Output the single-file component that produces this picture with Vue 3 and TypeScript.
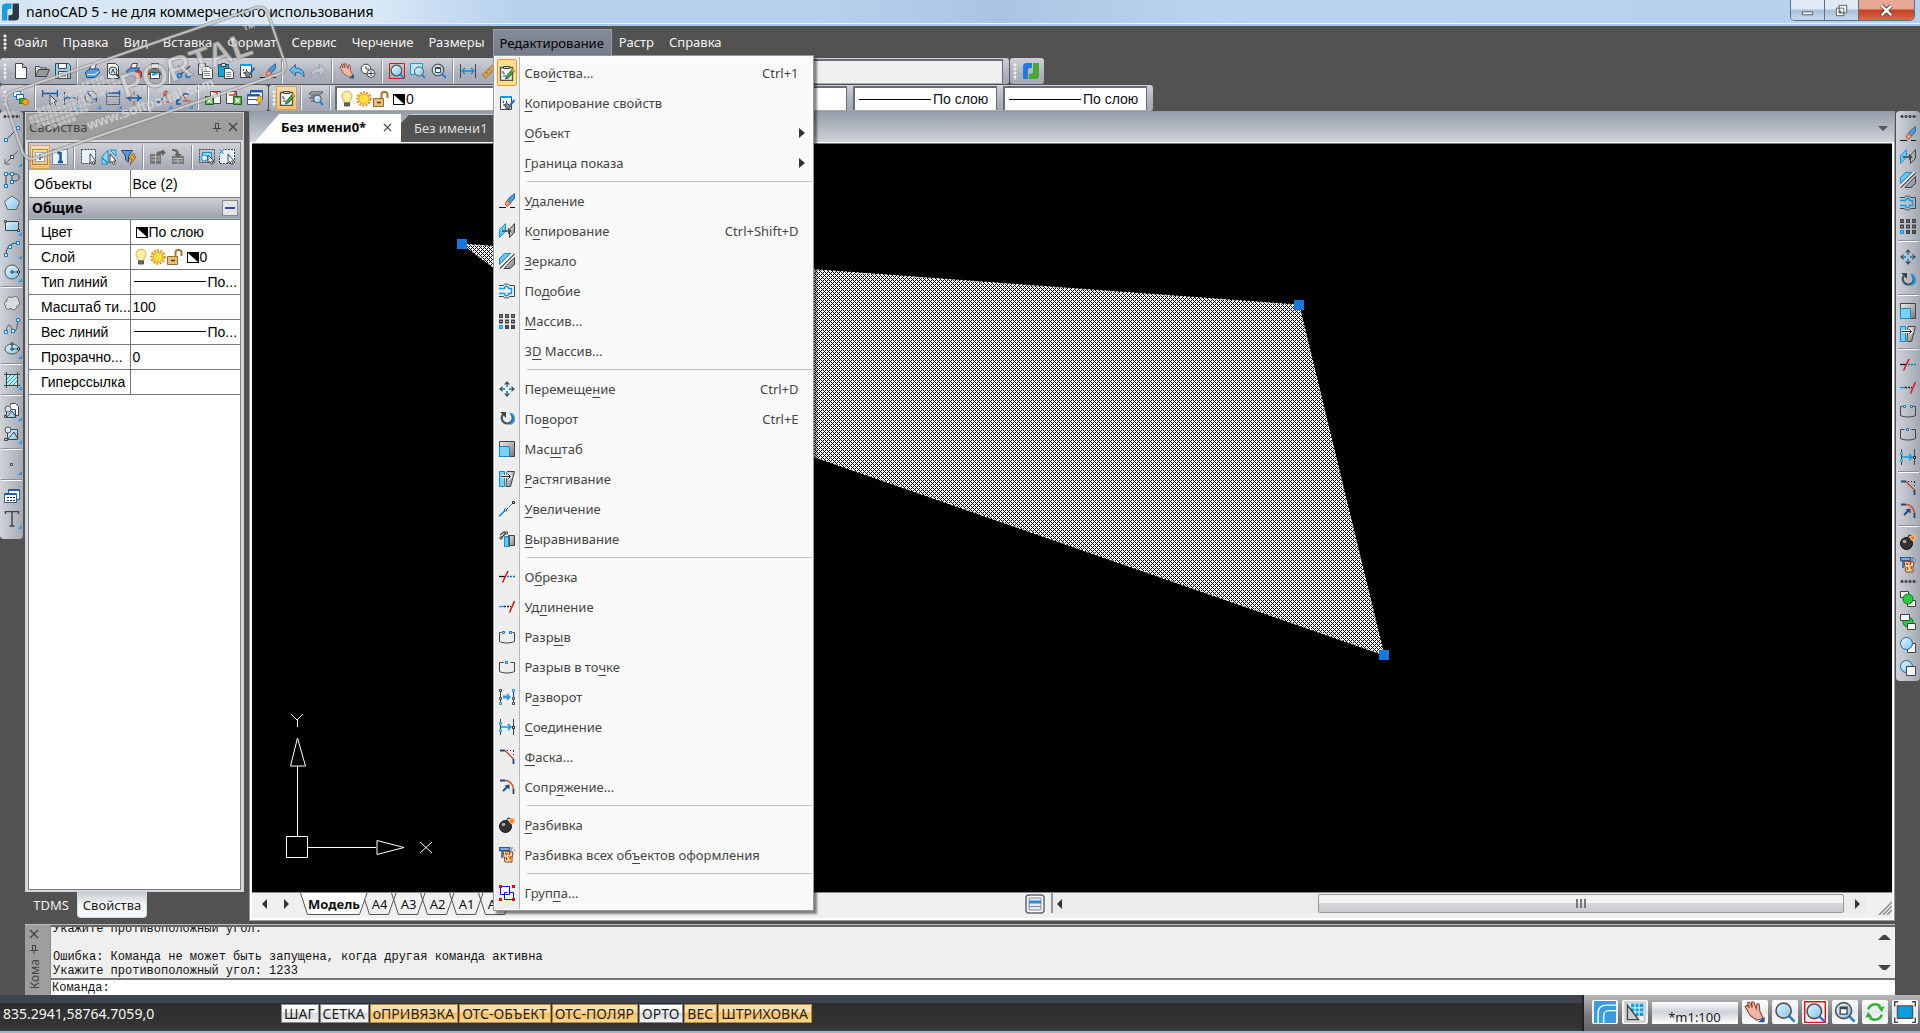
<script setup lang="ts">
interface MenuEntry { label: string; icon?: string; key?: string; sub?: boolean; on?: boolean }

const menus: string[] = ['Файл', 'Правка', 'Вид', 'Вставка', 'Формат', 'Сервис', 'Черчение', 'Размеры', 'Редактирование', 'Растр', 'Справка']

const groups: MenuEntry[][] = [
  [
    { label: 'Сво&йства...', icon: 'clip', key: 'Ctrl+1', on: true },
    { label: '&Копирование свойств', icon: 'match' },
    { label: '&Объект', sub: true },
    { label: '&Граница показа', sub: true },
  ],
  [
    { label: '&Удаление', icon: 'erase' },
    { label: 'К&опирование', icon: 'copyobj', key: 'Ctrl+Shift+D' },
    { label: '&Зеркало', icon: 'mirror' },
    { label: 'По&добие', icon: 'offset' },
    { label: '&Массив...', icon: 'array' },
    { label: '3&D Массив...' },
  ],
  [
    { label: 'Перемеще&ние', icon: 'move', key: 'Ctrl+D' },
    { label: 'По&ворот', icon: 'rotate', key: 'Ctrl+E' },
    { label: 'Мас&штаб', icon: 'scale' },
    { label: '&Растягивание', icon: 'stretch' },
    { label: '&Увеличение', icon: 'lengthen' },
    { label: '&Выравнивание', icon: 'align' },
  ],
  [
    { label: 'О&брезка', icon: 'trim' },
    { label: 'Уд&линение', icon: 'extend' },
    { label: 'Разр&ыв', icon: 'break' },
    { label: 'Разрыв в то&чке', icon: 'breakpt' },
    { label: 'Р&азворот', icon: 'reverse' },
    { label: '&Соединение', icon: 'join' },
    { label: '&Фаска...', icon: 'chamfer' },
    { label: 'Сопр&яжение...', icon: 'fillet' },
  ],
  [
    { label: '&Разбивка', icon: 'bomb' },
    { label: 'Разбивка всех об&ъектов оформления', icon: 'explode' },
  ],
  [{ label: 'Груп&па...', icon: 'group' }],
]

function parts(label: string): [string, string, string] {
  const i = label.indexOf('&')
  return [label.slice(0, i), label.slice(i + 1, i + 2), label.slice(i + 2)]
}

const standard: string[] = ['new', 'open', 'save', '|', 'print', 'preview', 'printx', 'plot', '|', 'cut', 'copy', 'paste', 'match', 'erase', '|', 'undo', 'redo', '|', 'hand', 'zoomrt', '|', 'zoomred', 'zoomwin', 'zoomdoc', '|', 'dim', 'ruler']
const dims: string[] = ['layers', '|', 'dimsel', 'dimlin', 'dimang', 'dimbox', 'dimcross', '|', 'dimtol', 'dimlead', '|', 'xl1', 'xl2', 'tablebolt']
const draw: string[] = ['line', 'ray', 'pline', 'penta', 'rect', 'arc', 'circle', '|', 'cloud', 'spline', 'ellipse', '|', 'hatch', '|', 'insdoc', 'insimg', '|', 'point', '|', 'table', 'text']
const modify: string[] = ['erase', 'copyobj', 'mirror', 'offset', 'array', '|', 'move', 'rotate', '|', 'scale', 'stretch', '|', 'trim', 'extend', 'break', 'breakpt', 'join', '|', 'chamfer', 'fillet', '|', 'bomb', 'explode']
const order: string[] = ['ord1', 'ord2', 'ord3', 'ord4']
const flyouts = new Set(['ray', 'rect', 'arc', 'circle', 'ellipse', 'hatch', 'insdoc', 'insimg', 'point', 'text', 'dimlin', 'dimang', 'dimbox', 'dimtol', 'dimlead'])
const propTools: string[] = ['selall', 'one', '|', 'sel', 'selflip', 'funnel', '|', 'gridup', 'griddown', '|', 'selsim', 'seldel']

const modes = [
  { name: 'ШАГ', on: false }, { name: 'СЕТКА', on: false }, { name: 'оПРИВЯЗКА', on: true },
  { name: 'ОТС-ОБЪЕКТ', on: true }, { name: 'ОТС-ПОЛЯР', on: true }, { name: 'ОРТО', on: false },
  { name: 'ВЕС', on: true }, { name: 'ШТРИХОВКА', on: true },
]
const sheets: string[] = ['A4', 'A3', 'A2', 'A1', 'A0']
const mapRows: number[][] = [[9, 17], [7, 19], [2, 20], [0, 18], [0, 14], [1, 12], [3, 9]]
</script>

<template>
  <svg class="defs" aria-hidden="true">
    <defs>
      <linearGradient id="gb" x1="0" y1="0" x2="1" y2="1"><stop offset="0" stop-color="#e8f6ff" /><stop offset="1" stop-color="#7cc4ee" /></linearGradient>
      <linearGradient id="gg" x1="0" y1="0" x2="1" y2="1"><stop offset="0" stop-color="#eee" /><stop offset="1" stop-color="#777" /></linearGradient>
      <pattern id="dots" width="4" height="4" patternUnits="userSpaceOnUse"><path d="M0 0h1v2H0zM2 0h1v1H2zM1 1h1v1H1zM3 1h1v1H3zM0 2h1v1H0zM2 2h1v2H2zM1 3h1v1H1zM3 3h1v1H3z" fill="#fff" stroke="none" /></pattern>
    </defs>
      <symbol id="new" viewBox="0 0 16 16"><path d="M2.500.5h7l4 4v11h-11z" fill="#fdfdfd" /><path d="M9.500.500v4h4" fill="#ccc" /></symbol>
      <symbol id="open" viewBox="0 0 16 16"><path d="M1.500 13.500v-10h4l1 1.500h6v2" fill="#ddd" /><path d="M1.500 13.500l3-7h11l-3 7z" fill="#999" /></symbol>
      <symbol id="save" viewBox="0 0 16 16"><path d="M.5.5h13l2 2v13H.5z" fill="#8cd0f4" /><path d="M3.500.5h8v5h-8zM3.500 8.500h9v7h-9z" fill="#fff" /><path d="M5 11h6M5 13h6" /></symbol>
      <symbol id="print" viewBox="0 0 16 16"><path d="M5.500 6l2-5.500h5l-2 6z" fill="#fff" /><path d="M1.500 9l4-3h9l1 4-5 4.500h-8z" fill="#5aa0e0" stroke="#1a4a88" /><path d="M3 11.500h8l4-3" stroke="#e8f4ff" /></symbol>
      <symbol id="preview" viewBox="0 0 16 16"><path d="M2.500.5h8l3 3v12h-11z" fill="#f6f6f6" /><circle cx="8" cy="8" r="4" fill="#c8e8fa" /><path d="M11 11l4 4" stroke-width="2" /><path d="M6.500 10L8 6l1.500 4" /></symbol>
      <symbol id="printx" viewBox="0 0 16 16"><path d="M4.500 5l2-4.500h5l-2 5z" fill="#fff" /><path d="M.5 8l4-3h9l-3 7h-8z" fill="#5a90d0" stroke="#1a4a88" /><circle cx="12" cy="11.500" r="4" fill="#e04040" stroke="#a02020" /><path d="M10.500 10l3 3m0-3l-3 3" stroke="#fff" /></symbol>
      <symbol id="plot" viewBox="0 0 16 16"><path d="M4.500.5h7v6h-7z" fill="#fff" /><path d="M1.500 5.500h13v6h-13z" fill="#777" /><path d="M3.500 9.500h9v6h-9z" fill="#fff" /><path d="M5 12l6-2" stroke="#0a9fe0" stroke-width="2" /></symbol>
      <symbol id="cut" viewBox="0 0 16 16"><path d="M2 3l9 8M14 3l-9 8" stroke-width="1.500" /><circle cx="3.500" cy="12.500" r="2" stroke="#0a70c0" stroke-width="1.500" /><circle cx="12" cy="12.500" r="2" stroke="#0a70c0" stroke-width="1.500" /></symbol>
      <symbol id="copy" viewBox="0 0 16 16"><path d="M1.500.5h7v11h-7z" fill="#eee" /><path d="M5.500 3.500h6l4 3v9h-10z" fill="#fff" /><path d="M7 8.500h6M7 10.500h6M7 12.500h6" stroke="#888" /></symbol>
      <symbol id="paste" viewBox="0 0 16 16"><path d="M.5 1.500h10v12H.5z" fill="#18a4d4" stroke="#08607c" /><path d="M3.500.5h4v3h-4z" fill="#ddd" /><path d="M6.500 5.500h6l3 3v7h-9z" fill="#fff" /><path d="M8 9.500h5M8 11.500h5M8 13.500h5" stroke="#888" /></symbol>
      <symbol id="match" viewBox="0 0 16 16"><path d="M1.500 1.500h11v13h-11z" fill="#f4f4f4" /><path d="M1 2h12" stroke="#0a9fe0" stroke-width="2" /><path d="M4.500 6v2M7.500 6v2M4 10h2" /><path d="M5.500 9.500l3-1 3 3-1.500 2.500H7.500z" fill="#888" /><path d="M11 10.500l4.500-5.500" stroke="#1470c0" stroke-width="2" /></symbol>
      <symbol id="erase" viewBox="0 0 16 16"><path d="M0 14.500h7M11 14.500h5" stroke="#111" /><path d="M15.500.5l-6 5-1.500 4 3 1 4.500-5z" fill="#4a9cd8" stroke="#2a6aa0" /><path d="M8.500 7l-2.500 4 2 2.500 3.500-3z" fill="#f0a080" stroke="#b05030" /></symbol>
      <symbol id="undo" viewBox="0 0 16 16"><path d="M.5 7l6-5.500v3.500c6 0 9 3 8.500 9-2-3.500-4-4.500-8.500-4.500V13z" fill="#6cb8e8" stroke="#2a6a98" /></symbol>
      <symbol id="redo" viewBox="0 0 16 16"><path d="M15.500 7l-6-5.500v3.500C3.500 5 .5 8 1 14c2-3.500 4-4.500 8.500-4.500V13z" fill="#c4c8cc" stroke="#9a9ea4" /></symbol>
      <symbol id="hand" viewBox="0 0 16 16"><path d="M9.500 14l-5-3.500L.8 4l1.500-.8L4 5 2.500 1.500 4 .8l2 4L5.500.8 7 .6l2 5L9.500 2l1.500.2.5 5.300 2.500 5z" fill="#f0b8a4" stroke="#8a4434" stroke-width=".8" /><path d="M10 15.500l5-4v4z" fill="#1458a8" stroke="none" /></symbol>
      <symbol id="zoomrt" viewBox="0 0 16 16"><circle cx="6" cy="6" r="4.800" fill="#f4f4f4" /><circle cx="11" cy="10.500" r="4" fill="#eee" /><path d="M6 3v3h3M8 10.500h6M11 8v5" /></symbol>
      <symbol id="zoom" viewBox="0 0 16 16"><path d="M11 11l4 4" stroke="#2c7fd8" stroke-width="2" /><circle cx="7" cy="7" r="5.500" fill="url(#gb)" stroke="#555" stroke-width="1.200" /></symbol>
      <symbol id="zoomred" viewBox="0 0 16 16"><path d="M.5.5h15v15H.5z" stroke="#e01010" /><path d="M11 11l4 4" stroke="#2c7fd8" stroke-width="2" /><circle cx="7.500" cy="7.500" r="5.300" fill="url(#gb)" stroke="#555" stroke-width="1.200" /></symbol>
      <symbol id="zoomwin" viewBox="0 0 16 16"><path d="M.5.5h12v11H.5z" stroke="#0a9fe0" fill="#bfe4f8" /><path d="M12 12l3 3" stroke="#2c7fd8" stroke-width="2" /><circle cx="9" cy="8.500" r="4.500" fill="url(#gb)" stroke="#555" /></symbol>
      <symbol id="zoomdoc" viewBox="0 0 16 16"><path d="M11 11l4 4" stroke="#2c7fd8" stroke-width="2" /><circle cx="7" cy="7" r="5.800" fill="url(#gb)" stroke="#555" stroke-width="1.200" /><path d="M4.500 4.500h5v5h-5zM4.500 5.500h5" fill="#fff" /></symbol>
      <symbol id="dim" viewBox="0 0 16 16"><path d="M.5 1v14M15.500 1v14" /><path d="M2 8h12M5 5L2 8l3 3M11 5l3 3-3 3" stroke="#0a8fe0" stroke-width="1.300" /></symbol>
      <symbol id="ruler" viewBox="0 0 16 16"><path d="M1.500 12l10-10 3 3-10 10z" fill="#e0a848" stroke="#9a6820" /><path d="M5 9l1.500 1.500M8 6l1.500 1.500" stroke="#7a4810" /></symbol>
      <symbol id="layers" viewBox="0 0 16 16"><path d="M.5 1.500h7v5h-7z" fill="#fff" stroke="#0a8fe0" /><path d="M3.500 4.500h7v5h-7z" fill="#fff" stroke="#0a60c0" /><path d="M6.500 8.500h6v5h-6z" fill="#30b030" stroke="#108010" /><circle cx="12.500" cy="12" r="3" fill="#f8a818" stroke="#c07000" /></symbol>
      <symbol id="dimsel" viewBox="0 0 16 16"><path d="M.5 0v7M15.500 0v7M1 3.500h14" stroke="#185a9c" stroke-width="1.500" /><path d="M8 5v10l2.500-2 1.500 3 1.500-1-1.500-3h3z" fill="#ddd" /></symbol>
      <symbol id="dimlin" viewBox="0 0 16 16"><path d="M1.500 2v13M14.500 6v8" /><path d="M2 8h12M5 6L2 8l3 2" stroke="#185a9c" stroke-width="1.500" /></symbol>
      <symbol id="dimang" viewBox="0 0 16 16"><circle cx="7" cy="7" r="6" /><path d="M3 2l9 10M8 12h4V8" stroke="#185a9c" stroke-width="1.500" /></symbol>
      <symbol id="dimbox" viewBox="0 0 16 16"><path d="M1.500.5v5M14.500.5v5M2 3h12" stroke="#185a9c" stroke-width="1.500" /><path d="M1.500 6.500h13v8h-13z" stroke-dasharray="2 1" /></symbol>
      <symbol id="dimcross" viewBox="0 0 16 16"><path d="M0 8h16M5 5L2 8l3 3M11 5l3 3-3 3" stroke="#185a9c" stroke-width="1.300" /><path d="M8 1v4M8 11v4" stroke="#d04020" /></symbol>
      <symbol id="dimtol" viewBox="0 0 16 16"><path d="M0 12h5l6-8" stroke="#185a9c" stroke-width="1.500" /><circle cx="11" cy="4" r="2.500" stroke="#d04020" /><path d="M11 0v8M7 12h7" stroke="#d04020" /></symbol>
      <symbol id="dimlead" viewBox="0 0 16 16"><path d="M0 13L8 4h6M1 9v5h4" stroke="#185a9c" stroke-width="1.500" /><path d="M7 5l4 6M7 11h8" stroke="#d04020" /></symbol>
      <symbol id="xl1" viewBox="0 0 16 16"><path d="M5.500 1.500h10v12h-10z" fill="#fff" /><path d="M.5 6.500h8v8h-8z" fill="#5cb040" stroke="#206020" /><path d="M2.500 8.500l4 4m0-4l-4 4" stroke="#fff" stroke-width="1.500" /><path d="M8 2h4v4" stroke="#d03020" stroke-width="1.500" /></symbol>
      <symbol id="xl2" viewBox="0 0 16 16"><path d="M.5 1.500h10v12H.5z" fill="#fff" /><path d="M7.500 6.500h8v8h-8z" fill="#5cb040" stroke="#206020" /><path d="M9.500 8.500l4 4m0-4l-4 4" stroke="#fff" stroke-width="1.500" /><path d="M3 5h6V1" stroke="#d03020" stroke-width="1.500" /></symbol>
      <symbol id="tablebolt" viewBox="0 0 16 16"><path d="M3.500.5h12v9h-12z" fill="#fff" stroke="#2a5aa0" /><path d="M.5 4.500h12v10H.5zM.5 9.500h12" fill="#fff" stroke="#2a5aa0" /><path d="M4 1.500h11M1 5.500h11" stroke="#2a5aa0" stroke-width="2" /><path d="M12 6l-3 5h3l-2 5 6-7h-3l2-3z" fill="#ffc020" stroke="#b07000" stroke-width=".6" /></symbol>
      <symbol id="clip" viewBox="0 0 16 16"><path d="M1.500 2.500h12v13h-12z" fill="#f4f4f4" stroke="#555" stroke-width="1.400" /><path d="M4.500 1.500h6v2h-6z" fill="#ccc" /><path d="M4 6v2l2 1M4 11h3" /><path d="M6.500 14l1-3 6-7 2 2-6 7z" fill="#40a838" stroke="#206018" stroke-width=".8" /><path d="M12.500 5l1-1.200 2 2-1 1.200z" fill="#f09070" stroke="none" /></symbol>
      <symbol id="look" viewBox="0 0 16 16"><path d="M3 2h12l-2 2H1zM3 6h8M1 8h6M3 11h3" fill="#eee" /><path d="M12 12l3 3" stroke="#2c7fd8" stroke-width="2" /><circle cx="9.500" cy="9" r="3.800" fill="url(#gb)" stroke="#555" /></symbol>
      <symbol id="bulb" viewBox="0 0 16 16"><path d="M8 .5c-6 0-6 6-3 9v2h6v-2c3-3 3-9-3-9z" fill="#fff0a0" stroke="#c8a860" /><path d="M5.500 12h5v3h-5z" fill="#666" stroke="#555" /></symbol>
      <symbol id="sun" viewBox="0 0 16 16"><circle cx="8" cy="8" r="6.500" stroke="#e89820" stroke-width="2.500" stroke-dasharray="2 1.200" /><circle cx="8" cy="8" r="5" fill="#ffe040" stroke="#f0a020" /></symbol>
      <symbol id="lock" viewBox="0 0 16 16"><path d="M8.500 8V3.500c0-3.500 6-3.500 6 0V7" stroke="#a87830" stroke-width="2" /><path d="M.5 7.500h10v8H.5z" fill="#e8c078" stroke="#9a6c28" /><path d="M4 11.500h4" stroke="#5a3808" stroke-width="1.500" /></symbol>
      <symbol id="bw" viewBox="0 0 16 16"><path d="M3 3h12v11H3z" fill="#000" stroke="none" /><path d="M4 4l10 9H4z" fill="#fff" stroke="none" /></symbol>
      <symbol id="selall" viewBox="0 0 16 16"><path d="M.5.5h15v15H.5z" stroke-dasharray="1 1" /><path d="M3.500 3.500h9v9h-9z" fill="#fff" stroke="#2a60b0" stroke-dasharray="1 1" /><path d="M8 5v6M5 8h6" stroke="#1450b0" stroke-width="1.500" /></symbol>
      <symbol id="one" viewBox="0 0 16 16"><path d="M.5.5h15v15H.5z" stroke-dasharray="1 1" fill="#e4f2fa" /><path d="M8.500 3v10M5.500 4.500L8 3M6 13h5" stroke="#185a9c" stroke-width="2.500" /></symbol>
      <symbol id="sel" viewBox="0 0 16 16"><path d="M.5.5h14v14H.5z" stroke-dasharray="2 1" fill="#e4f2fa" /><path d="M9 5v9l2-1.500 1.500 3 1.500-.8-1.500-2.700H15z" fill="#fff" /></symbol>
      <symbol id="selflip" viewBox="0 0 16 16"><path d="M7 1v13L.8 8zM9 1h6v6zM1 9v6h6z" fill="#9cd4f4" stroke="#0a8fd0" /><path d="M9 5v9l2-1.500 1.500 3 1.500-.8-1.500-2.700H15z" fill="#fff" /></symbol>
      <symbol id="funnel" viewBox="0 0 16 16"><path d="M.5 1.500h11L7.500 7v6l-3-2V7z" fill="#5a98d0" stroke="#1a4a80" /><path d="M11 5l-3 5h3l-2 6 6-8h-3l2-3z" fill="#f8b020" stroke="#8a5808" stroke-width=".8" /></symbol>
      <symbol id="gridup" viewBox="0 0 16 16"><path d="M0 5h11v10H0z" fill="#777" stroke="none" /><path d="M1 8h9M1 11h9M5.500 5v10" stroke="#bbb" /><path d="M6 7c0-4 2-5 6-5V0l4 3.500L12 7V5C9 5 8 5 6 7z" fill="#666" stroke="none" /></symbol>
      <symbol id="griddown" viewBox="0 0 16 16"><path d="M2 7h12v8H2z" fill="#777" stroke="none" /><path d="M3 9.500h10M3 12h10M8 7v8" stroke="#bbb" /><path d="M2 0c5 0 7 1 7 5h3l-4 4-4-4h2c0-3-1-3-4-3z" fill="#666" stroke="none" /></symbol>
      <symbol id="selsim" viewBox="0 0 16 16"><path d="M.5.5h15v13H.5z" stroke-dasharray="2 1" /><path d="M3.500 3.500h9v5h-9z" fill="#9cd4f4" stroke="#0a8fd0" /><circle cx="5.500" cy="9" r="3" fill="#dff" stroke="#0a8fd0" /><path d="M9 6v8l2-1.500 1.500 3 1.500-.8-1.500-2.700H15z" fill="#fff" /></symbol>
      <symbol id="seldel" viewBox="0 0 16 16"><path d="M6 .5h9.500v14H.500V7" stroke-dasharray="2 1" fill="#e4f2fa" /><path d="M.5.5l4 4m0-4l-4 4" stroke="#0a8fd0" /><path d="M9 5v9l2-1.500 1.500 3 1.500-.8-1.500-2.700H15z" fill="#fff" /></symbol>
      <symbol id="line" viewBox="0 0 16 16"><path d="M2 14L14 2" /><path d="M.5 12.500h3v3h-3zM12.500.5h3v3h-3z" fill="#fff" stroke="#0a78d0" /></symbol>
      <symbol id="ray" viewBox="0 0 16 16"><path d="M1 15L14 2M1 10v5h5" stroke="#666" /><path d="M6.500 6.500h3v3h-3z" fill="#fff" /></symbol>
      <symbol id="pline" viewBox="0 0 16 16"><path d="M2 14V2h6v7c6 0 7-1 7-4s-2-3-7-3" /><path d="M.5.5h3v3h-3zM6.500.5h3v3h-3zM.5 12.500h3v3h-3zM6.500 8.500h3v3h-3z" fill="#fff" stroke="#0a78d0" /></symbol>
      <symbol id="penta" viewBox="0 0 16 16"><path d="M8 1l7.500 5.500-3 8h-9l-3-8z" fill="url(#gb)" stroke="#666" /></symbol>
      <symbol id="rect" viewBox="0 0 16 16"><path d="M1.500 3.500h13v9h-13z" fill="url(#gb)" /><path d="M.5 2.500h2v2h-2zM13.500 11.500h2v2h-2z" fill="#fff" /></symbol>
      <symbol id="arc" viewBox="0 0 16 16"><path d="M2 14C2 6 6 2 14 2" /><path d="M.5 12.500h3v3h-3zM12.500.5h3v3h-3zM4.500 4.500h3v3h-3z" fill="#fff" stroke="#0a78d0" /></symbol>
      <symbol id="circle" viewBox="0 0 16 16"><circle cx="8" cy="8" r="7" fill="url(#gb)" stroke="#555" /><path d="M8 8h7" stroke="#0a78d0" /><path d="M7 7h2v2H7zM13.500 7h2v2h-2z" fill="#fff" stroke="#333" /></symbol>
      <symbol id="cloud" viewBox="0 0 16 16"><path d="M3 6c-1-4 4-5 5-3 2-3 8-1 6 2 3 2 1 6-1 6 0 4-5 5-6 2-3 3-7 0-5-2-3-1-2-5 1-5z" fill="#d8dce0" stroke="#666" /></symbol>
      <symbol id="spline" viewBox="0 0 16 16"><path d="M2 14C4 4 6 6 8 11s5 3 6-9" stroke="#555" /><path d="M.5 12.500h3v3h-3zM7.500 11.500h3v3h-3zM12.500.5h3v3h-3z" fill="#fff" stroke="#0a78d0" /></symbol>
      <symbol id="ellipse" viewBox="0 0 16 16"><ellipse cx="8" cy="8" rx="7" ry="5" fill="url(#gb)" stroke="#555" /><path d="M8 3v5h7" stroke="#0a78d0" /><path d="M7 2h2v2H7zM7 7h2v2H7zM13.500 7h2v2h-2z" fill="#fff" stroke="#333" /></symbol>
      <symbol id="hatch" viewBox="0 0 16 16"><path d="M0 2.500h16M0 13.500h16M2.500 0v16M13.500 0v16" /><path d="M3 3h10v10H3z" fill="#c4e6f8" stroke="none" /><path d="M3 7l4-4M3 11l8-8M5 13l8-8M9 13l4-4" stroke="#0a9fe0" /></symbol>
      <symbol id="insdoc" viewBox="0 0 16 16"><path d="M6.500 2.500v-2h5l3 3v9h-8" fill="#fff" /><path d="M2.500 6.500h9v8h-9z" fill="url(#gb)" /><circle cx="4" cy="6" r="3" fill="#cfe8f8" stroke="#555" /><path d="M3 14l5-6 4 6M.5 12.500h2v2h-2z" /></symbol>
      <symbol id="insimg" viewBox="0 0 16 16"><path d="M3.500 3.500h10v10h-10z" fill="url(#gb)" /><circle cx="4" cy="4" r="3" fill="#cfe8f8" stroke="#555" /><path d="M4 13l6-7 4 7M.5 12.500h3v2h-3z" /></symbol>
      <symbol id="point" viewBox="0 0 16 16"><path d="M6.500 6.500h2v2h-2z" fill="#fff" /></symbol>
      <symbol id="table" viewBox="0 0 16 16"><path d="M4.500 1.500h11v10h-11z" fill="#fff" stroke="#2a5aa0" /><path d="M.5 5.500h12v9H.5z" fill="#fff" stroke="#2a5aa0" /><path d="M5 2h10M1 6h11" stroke="#2a5aa0" stroke-width="2" /><path d="M3 9.500h2m1 0h2m1 0h2M3 12.500h2m1 0h2m1 0h2" stroke="#222" /></symbol>
      <symbol id="text" viewBox="0 0 16 16"><path d="M1.500 3V.5h13V3M8 .5v14M5.500 15h5" stroke-width="1.500" /></symbol>
      <symbol id="copyobj" viewBox="0 0 16 16"><path d="M.5 14.500v-8l6-6v8z" fill="#6cc4f0" stroke="#0a9fe0" /><path d="M10.500 14.500v-8l5-6v9z" fill="url(#gg)" /><path d="M3 8h8M9 5.500L11.500 8 9 10.500" stroke-width="1.400" /></symbol>
      <symbol id="mirror" viewBox="0 0 16 16"><path d="M.5 10.500v-5l5-5h6l-11 11z" fill="#6cc4f0" stroke="#0a8fd0" /><path d="M5 15.500h6l4.500-4v-7z" fill="url(#gg)" /><path d="M1 15L15 1" stroke="#fff" stroke-width="3" /><path d="M1 15.500L15.500 1" stroke-width="1.200" /></symbol>
      <symbol id="offset" viewBox="0 0 16 16"><path d="M0 2.500h4.500c0-2 6-2 6 0h5v11h-5c0 2-6 2-6 0H0" /><path d="M0 5.500h5.500c0-3 4-3 4 0h3v5h-3c0 3-4 3-4 0H0" stroke="#0a9fe0" stroke-width="1.400" /></symbol>
      <symbol id="array" viewBox="0 0 16 16"><path d="M.7 1.700h2.600v2.600H.7zM6.700 1.700h2.600v2.600H6.700zM12.700 1.700h2.600v2.600h-2.600zM.7 7.200h2.600v2.600H.7zM6.700 7.200h2.600v2.600H6.700zM12.700 7.200h2.600v2.600h-2.600z" stroke-width="1.400" /><path d="M6.700 12.700h2.600v2.600H6.700zM12.700 12.700h2.600v2.600h-2.600z" fill="#777" stroke-width="1.400" /><path d="M.7 12.700h2.600v2.600H.7z" fill="#fff" stroke="#0a9fe0" stroke-width="1.400" /></symbol>
      <symbol id="move" viewBox="0 0 16 16"><path d="M8 0l3 3.500H5zM8 16l3-3.500H5zM0 8l3.500-3v6zM16 8l-3.500-3v6z" fill="#4a4f58" stroke="none" /><path d="M8 3.500V6M8 10v2.500M3.500 8H6M10 8h2.500" stroke="#0a9fe0" stroke-width="2" /></symbol>
      <symbol id="rotate" viewBox="0 0 16 16"><path d="M4 3.500a5.500 5.500 0 1 0 8-.5" stroke="#456" stroke-width="2.200" /><path d="M11 2.500a5.500 5.500 0 0 1 0 10.500" stroke="#1a98e0" stroke-width="2.200" /><path d="M1 1h6v6z" fill="#444" stroke="none" /></symbol>
      <symbol id="scale" viewBox="0 0 16 16"><path d="M.5.5h15v15H.5z" fill="url(#gg)" /><path d="M.5 5.500h10v10H.5z" fill="#7cd0f8" stroke="#0a8fd0" /></symbol>
      <symbol id="stretch" viewBox="0 0 16 16"><path d="M8 .5h7.500l-4 15H7z" fill="url(#gg)" /><path d="M.5.5h5v15h-5z" fill="#7cd0f8" stroke="#0a8fd0" /><path d="M2 5.500h9M9 3l2.500 2.500L9 8" stroke="#fff" stroke-width="3" /><path d="M2 5.500h9M9 3l2.500 2.500L9 8" stroke="#222" /></symbol>
      <symbol id="lengthen" viewBox="0 0 16 16"><path d="M0 15.500l6-6" stroke="#0a78d0" stroke-width="1.300" /><path d="M8 8l6-6" stroke-dasharray="2 1" /><path d="M5.500 8h2v2h-2z" fill="#fff" stroke="#0a78d0" /><path d="M13.500.5h2v2h-2z" fill="#fff" stroke="#222" /></symbol>
      <symbol id="align" viewBox="0 0 16 16"><path d="M10 4.500h5.500v10H10z" fill="url(#gg)" /><path d="M5.500 5.500h5v10h-5z" fill="#6cc8f8" stroke="#0a8fd0" /><path d="M2 7l5-5M1 4l4-3 2 1M10 4v11" stroke-width="1.400" /><path d="M1 6h2v2H1zM6.500 1h2v2h-2z" fill="#fff" /></symbol>
      <symbol id="trim" viewBox="0 0 16 16"><path d="M0 7.500h6" stroke="#111" stroke-width="1.300" /><path d="M8 7.500h8" stroke="#0a78d0" stroke-width="1.300" stroke-dasharray="2 1" /><path d="M9 2L3.500 13.500" stroke="#e01010" stroke-width="1.500" /></symbol>
      <symbol id="extend" viewBox="0 0 16 16"><path d="M0 7.500h5" stroke="#0a9fe0" stroke-width="1.300" /><path d="M5 7.500h7" stroke="#222" stroke-width="1.300" stroke-dasharray="2 1" /><path d="M15.500 2L10.500 13.500" stroke="#e01010" stroke-width="1.500" /></symbol>
      <symbol id="break" viewBox="0 0 16 16"><path d="M2.500 3.500h-2v9c4 2 11 2 15 0v-9h-2" /><path d="M3.500 2.500h2v2h-2zM10.500 2.500h2v2h-2z" fill="#fff" stroke="#0a78d0" /></symbol>
      <symbol id="breakpt" viewBox="0 0 16 16"><path d="M4.500 3.500h-4v9c4 2 11 2 15 0v-9h-4" /><path d="M6.500 2.500h2v2h-2z" fill="#fff" stroke="#0a78d0" /></symbol>
      <symbol id="reverse" viewBox="0 0 16 16"><path d="M1.500 2v12M14.500 2v12" /><path d="M.5.500h2v2h-2zM.5 8.500h2v2h-2zM13.500 8.500h2v2h-2zM13.500 13.500h2v2h-2z" fill="#fff" /><path d="M.5 13.500h2v2h-2zM13.500.5h2v2h-2z" fill="#fff" stroke="#0a9fe0" /><path d="M4 6.500h4V4l4 4-4 4V9.500H4z" fill="#2aa0e8" stroke="none" /></symbol>
      <symbol id="join" viewBox="0 0 16 16"><path d="M1.500 0v16M14.500 0v16" /><path d="M.5 3.500h2v2h-2zM.5 10.500h2v2h-2z" fill="#fff" stroke="#0a9fe0" /><path d="M13.500 7.500h2v2h-2z" fill="#fff" stroke="#222" /><path d="M2 8h9M9 5l3 3-3 3" stroke="#0a9fe0" stroke-width="1.600" /></symbol>
      <symbol id="chamfer" viewBox="0 0 16 16"><path d="M1 1.500h5M14.500 10v5" stroke="#1a4a80" stroke-width="1.800" /><path d="M6 1.500L14.500 10" stroke="#d04828" stroke-width="1.500" /><path d="M8 1.500h7M14.500 2v6" stroke="#222" stroke-dasharray="1 2" /></symbol>
      <symbol id="fillet" viewBox="0 0 16 16"><path d="M1 1.500h5M14.500 10v5" stroke="#1a4a80" stroke-width="1.800" /><path d="M6 1.500c5 0 8 4 8.500 8.500" stroke="#d04828" stroke-width="1.500" /><path d="M4 12l4-4" stroke="#1a4a80" stroke-width="1.800" /><path d="M10.500 5.500v5l-5-4z" fill="#1a4a80" stroke="none" /></symbol>
      <symbol id="bomb" viewBox="0 0 16 16"><circle cx="6.500" cy="9.500" r="6" fill="#333" stroke="#111" /><circle cx="4.500" cy="7.500" r="1.800" fill="#aaa" stroke="none" /><path d="M8 3c1-3 3-2 4 0" stroke-width="1.300" /><circle cx="13" cy="4" r="2.500" fill="#f88030" stroke="#ffc870" /></symbol>
      <symbol id="explode" viewBox="0 0 16 16"><path d="M.5.5h10v3H.5zM3 4v7" stroke="#2a5aa0" fill="#9cc4e8" stroke-width="1.500" /><path d="M4 4l10 1-1 6v4H6z" fill="#fff0c0" stroke="#704030" /><path d="M6 6l2 2M11 5l-1 3M12 9l-1 3M7 10l1 3" stroke="#e02818" stroke-width="1.500" /><path d="M8 5l1 2M9 9l2 2M12 12l-2 2" stroke="#f0a010" stroke-width="1.500" /><path d="M12 1h2m1 2h1M12 3h1" stroke="#555" /></symbol>
      <symbol id="group" viewBox="0 0 16 16"><path d="M1.500 1.500h9v8h-9zM5.500 7.500h9v7h-9z" fill="#fff" stroke="#1010e0" /><path d="M8 5h2v4H8z" fill="#d8e0f4" stroke="none" /><path d="M0 0h3v3H0zM13 0h3v3h-3zM0 13h3v3H0zM13 13h3v3h-3z" fill="#e01010" stroke="none" /></symbol>
      <symbol id="ord1" viewBox="0 0 16 16"><path d="M.5.5h8v6h-8zM7.500 9.500h8v6h-8z" fill="#f4f4f4" /><circle cx="8" cy="8" r="5" fill="#28cc40" stroke="#187020" /></symbol>
      <symbol id="ord2" viewBox="0 0 16 16"><circle cx="8" cy="8" r="5" fill="#28cc40" stroke="#187020" /><path d="M.5.5h9v6h-9zM7.500 9.500h8v6h-8z" fill="#f4f4f4" /></symbol>
      <symbol id="ord3" viewBox="0 0 16 16"><path d="M7.500 6.500h8v9h-8z" fill="#f4f4f4" /><circle cx="6.500" cy="6.500" r="6" fill="url(#gb)" stroke="#1a6aa8" /></symbol>
      <symbol id="ord4" viewBox="0 0 16 16"><circle cx="6.500" cy="6.500" r="6" fill="url(#gb)" stroke="#1a6aa8" /><path d="M6.500 6.500h9v9h-9z" fill="#f4f4f4" /></symbol>
      <symbol id="snap" viewBox="0 0 16 16"><path d="M0 0h16v16H0z" fill="#3a9ce0" stroke="none" /><path d="M3 16V9c0-4 2-6 6-6h7M7 16v-5c0-3 1-4 4-4h5" stroke="#fff" /></symbol>
      <symbol id="gridpen" viewBox="0 0 16 16"><path d="M0 0h16v16H0z" fill="#d4d4d4" stroke="none" /><path d="M3 2h11v12H3z" fill="#eef6fa" stroke="none" /><path d="M5 2h9v9H5z" fill="#0a9fe0" stroke="none" /><path d="M5 5h9M5 8h9M8 2v9M11 2v9" stroke="#fff" stroke-width=".7" /><path d="M2.500 3v10.500h8z" fill="#ccc" /></symbol>
      <symbol id="refresh" viewBox="0 0 16 16"><path d="M3 6a5.500 5.500 0 0 1 9-2M13 10a5.500 5.500 0 0 1-9 2" stroke="#30b030" stroke-width="1.800" /><path d="M13 8l-3-3.500 5-.5zM3 8l3 3.500L1 12z" fill="#30b030" stroke="none" /></symbol>
      <symbol id="screen" viewBox="0 0 16 16"><path d="M2.500 3.500h11v9h-11z" fill="#0a9fe0" stroke="#555" /><path d="M.5 4V.5H3M13 .5h2.500V4M.5 12v3.500H3M13 15.500h2.500V12" /></symbol>
      <symbol id="logo" viewBox="0 0 16 16"><path d="M0 4c0-3 1-4 5-4h4v5H7c-1 0-2 1-2 2v9H0z" fill="#1a9ce0" stroke="none" /><path d="M10 0h6v12c0 3-1 4-4 4H6v-5h2c1 0 2-1 2-2z" fill="#2a3848" stroke="none" /></symbol>
      <symbol id="logo2" viewBox="0 0 16 16"><path d="M0 4c0-3 1-4 5-4h4v5H7c-1 0-2 1-2 2v9H0z" fill="#1a7ce0" stroke="none" /><path d="M10 0h6v12c0 3-1 4-4 4H6v-5h2c1 0 2-1 2-2z" fill="#48a830" stroke="none" /></symbol>
      <symbol id="pin" viewBox="0 0 10 10"><path d="M3.500 1v5M3 1.500h4M6.500 1v5M1 6.500h8M5 6.500V10" /></symbol>
      <symbol id="x" viewBox="0 0 10 10"><path d="M1 1l8 8M9 1L1 9" stroke-width="1.400" /></symbol>
  </svg>

  <div class="app">
    <header class="title">
      <svg class="logo"><use href="#logo" /></svg>
      <h1>nanoCAD 5 - не для коммерческого использования</h1>
      <div class="winbtns">
        <button aria-label="Свернуть"><svg viewBox="0 0 16 16"><path d="M2.500 9.500h11v3h-11z" fill="#fff" stroke="#555" /></svg></button>
        <button aria-label="Восстановить"><svg viewBox="0 0 16 16"><path d="M5.500 2.500h8v8h-8zM2.500 5.500h8v8h-8z" fill="#fff" stroke="#555" /><path d="M5.500 8.500h2v2h-2z" stroke="#555" fill="none" /></svg></button>
        <button class="close" aria-label="Закрыть"><svg viewBox="0 0 16 16"><path d="M3 3l10 10M13 3L3 13" stroke="#533" stroke-width="4.500" /><path d="M3 3l10 10M13 3L3 13" stroke="#fff" stroke-width="2.800" /></svg></button>
      </div>
    </header>

    <nav class="menubar">
      <i class="grip" />
      <div v-for="m in menus" :key="m" class="mi">
        <button :class="{ open: m === 'Редактирование' }">{{ m }}</button>
        <div v-if="m === 'Редактирование'" class="popup" role="menu">
          <div v-for="(g, gi) in groups" :key="gi" class="grp">
            <button v-for="e in g" :key="e.label" class="row" role="menuitem">
              <span class="ic" :class="{ on: e.on }"><svg v-if="e.icon"><use :href="'#' + e.icon" /></svg></span>
              <span class="lb">{{ parts(e.label)[0] }}<u>{{ parts(e.label)[1] }}</u>{{ parts(e.label)[2] }}</span>
              <span v-if="e.key" class="key">{{ e.key }}</span>
              <span v-if="e.sub" class="arrow" />
            </button>
          </div>
        </div>
      </div>
    </nav>

    <div class="toolrow">
      <div class="bar wide1">
        <i class="grip" />
        <template v-for="(t, i) in standard" :key="i">
          <i v-if="t === '|'" class="sep" /><button v-else class="tool" :aria-label="t"><svg><use :href="'#' + t" /></svg></button>
        </template>
        <span class="field grey" />
      </div>
      <div class="bar mini"><i class="grip" /><button class="tool" aria-label="nanoCAD"><svg><use href="#logo2" /></svg></button></div>
    </div>
    <div class="toolrow second">
      <div class="bar">
        <i class="grip" />
        <template v-for="(t, i) in dims" :key="i">
          <i v-if="t === '|'" class="sep" /><button v-else class="tool" :class="{ fly: flyouts.has(t) }" :aria-label="t"><svg><use :href="'#' + t" /></svg></button>
        </template>
      </div>
      <div class="bar wide2">
        <i class="grip" />
        <button class="tool active" aria-label="Свойства"><svg><use href="#clip" /></svg></button>
        <i class="sep" />
        <button class="tool" aria-label="Слои"><svg><use href="#look" /></svg></button>
        <i class="sep" />
        <label class="field layer"><svg v-for="s in ['bulb', 'sun', 'lock', 'bw']" :key="s"><use :href="'#' + s" /></svg><select aria-label="Слой"><option>0</option></select></label>
        <label class="field ls"><i class="rule" /><select aria-label="Тип линий"><option>По слою</option></select></label>
        <label class="field ls"><i class="rule" /><select aria-label="Вес линий"><option>По слою</option></select></label>
      </div>
    </div>

    <main class="work">
      <aside class="vbar">
        <i class="hgrip" />
        <template v-for="(t, i) in draw" :key="i">
          <i v-if="t === '|'" class="vsep" /><button v-else class="vtool" :class="{ fly: flyouts.has(t) }" :aria-label="t"><svg><use :href="'#' + t" /></svg></button>
        </template>
      </aside>

      <section class="side">
        <div class="panel">
          <div class="ptitle"><span>Свойства</span><svg><use href="#pin" /></svg><svg><use href="#x" /></svg></div>
          <div class="pbody">
            <div class="ptools">
              <template v-for="(t, i) in propTools" :key="i">
                <i v-if="t === '|'" class="sep" /><button v-else class="tool" :class="{ active: t === 'selall' }" :aria-label="t"><svg><use :href="'#' + t" /></svg></button>
              </template>
            </div>
            <table>
              <tbody>
                <tr class="first"><th scope="row">Объекты</th><td>Все (2)</td></tr>
                <tr class="head"><th colspan="2" scope="colgroup"><span>Общие<button aria-label="Свернуть группу" /></span></th></tr>
                <tr><th scope="row">Цвет</th><td><div class="val"><svg><use href="#bw" /></svg>По слою</div></td></tr>
                <tr><th scope="row">Слой</th><td><div class="val"><svg v-for="s in ['bulb', 'sun', 'lock', 'bw']" :key="s"><use :href="'#' + s" /></svg>0</div></td></tr>
                <tr><th scope="row">Тип линий</th><td><div class="val"><i class="rule" />По...</div></td></tr>
                <tr><th scope="row">Масштаб ти...</th><td>100</td></tr>
                <tr><th scope="row">Вес линий</th><td><div class="val"><i class="rule" />По...</div></td></tr>
                <tr><th scope="row">Прозрачно...</th><td>0</td></tr>
                <tr><th scope="row">Гиперссылка</th><td /></tr>
              </tbody>
            </table>
          </div>
        </div>
        <div class="ptabs"><button>TDMS</button><button class="cur">Свойства</button></div>
      </section>

      <section class="doc">
        <div class="dtabs">
          <button class="dtab cur">Без имени0*<svg><use href="#x" /></svg></button>
          <button class="dtab">Без имени1</button>
          <i class="more" />
        </div>
        <div class="view">
          <svg class="canvas">
            <polygon points="210,100 1047,161 1132,511 436,269" fill="url(#dots)" stroke="#fff" stroke-dasharray="2 2" />
            <path d="M205 95h10v10h-10zM1042 156h10v10h-10zM1127 506h10v10h-10z" fill="#1478e0" stroke="none" />
          </svg>
          <svg class="ucs" viewBox="0 0 160 160">
            <path d="M4.500 126.500h21v21h-21zM15.500 126V56M15.500 28l-7 28h15zM26 137.500h68M122 137.500l-27-7v14zM9 4l6 6 6-6M15.500 10v7M138 132l12 11M150 132l-12 11" stroke="#fff" />
          </svg>
        </div>
        <div class="sheets">
          <i class="tri l" /><i class="tri r" />
          <button class="sheet model"><svg viewBox="0 0 68 22"><path d="M.5 0l7 21.500h52L67 0" /></svg><span>Модель</span></button>
          <button v-for="s in sheets" :key="s" class="sheet"><svg viewBox="0 0 35 22"><path d="M.5 0l7 21.500h19L34 0" /></svg><span>{{ s }}</span></button>
          <button class="listbtn" aria-label="Листы"><svg viewBox="0 0 20 20"><rect x="1" y="1" width="18" height="18" rx="3" fill="#fff" stroke="#667" stroke-width="1.500" /><path d="M4 4h12v12H4z" fill="#e4ecf4" stroke="#889" /><path d="M4 8h12" stroke="#2a88e0" stroke-width="3" /><path d="M4 12.500h12" stroke="#889" /></svg></button>
          <div class="hscroll"><i class="tri l" /><span class="track"><i class="thumb"><b /><b /><b /></i></span><i class="tri r" /></div>
          <svg class="sizer" viewBox="0 0 14 14"><path d="M1 14L14 1M5 14l9-9M9 14l5-5" stroke="#888" stroke-width="1.500" /></svg>
        </div>
      </section>

      <aside class="vbar right">
        <i class="hgrip" />
        <template v-for="(t, i) in modify" :key="i">
          <i v-if="t === '|'" class="vsep" /><button v-else class="vtool" :aria-label="t"><svg><use :href="'#' + t" /></svg></button>
        </template>
        <i class="hgrip" />
        <button v-for="t in order" :key="t" class="vtool" :aria-label="t"><svg><use :href="'#' + t" /></svg></button>
      </aside>
    </main>

    <section class="cmd">
      <div class="cstrip"><svg><use href="#x" /></svg><svg><use href="#pin" /></svg><span>Кома</span></div>
      <div class="cbody">
        <div class="log">
          <div class="lines"><p>Укажите противоположный угол:</p><p>&nbsp;</p><p>Ошибка: Команда не может быть запущена, когда другая команда активна</p><p>Укажите противоположный угол: 1233</p></div>
          <div class="vs"><i class="tri u" /><i class="tri d" /></div>
        </div>
        <label class="prompt">Команда:<input type="text" aria-label="Команда"></label>
      </div>
    </section>

    <footer class="status">
      <output>835.2941,58764.7059,0</output>
      <div class="modes"><button v-for="m in modes" :key="m.name" :class="{ on: m.on }">{{ m.name }}</button></div>
      <div class="stools">
        <button class="st" aria-label="snap"><svg><use href="#snap" /></svg></button>
        <button class="st" aria-label="grid"><svg><use href="#gridpen" /></svg></button>
        <select class="scale" aria-label="Масштаб"><option>*m1:100</option></select>
        <button v-for="s in ['hand', 'zoom', 'zoomred', 'zoomdoc', 'refresh', 'screen']" :key="s" class="st" :aria-label="s"><svg><use :href="'#' + s" /></svg></button>
      </div>
    </footer>

    <svg class="stamp" viewBox="0 0 300 170" aria-hidden="true">
      <g transform="translate(3 95) rotate(-19)">
        <rect x="0" y="0" width="277" height="70" rx="9" stroke="#777" stroke-opacity=".5" stroke-width="4" />
        <rect x="0" y="0" width="277" height="70" rx="9" stroke="#ddd" stroke-opacity=".75" stroke-width="2" />
        <g fill="#d8d8d8" fill-opacity=".6">
          <template v-for="(r, y) in mapRows" :key="y"><rect v-for="c in r[1] - r[0]" :key="c" :x="12 + (r[0] + c) * 5" :y="14 + y * 5" width="4" height="4" /></template>
        </g>
        <text x="114" y="43" class="big">PORTAL</text>
        <text x="70" y="61" class="url">www.softportal.com</text>
        <text x="249" y="18" class="tm">TM</text>
      </g>
    </svg>
  </div>
</template>

<style>
body { margin: 0; background: #525252; }
</style>

<style scoped>
* { box-sizing: border-box; }
button, select, input { font: inherit; color: inherit; border: 0; background: none; padding: 0; margin: 0; border-radius: 0; }
select { appearance: none; }
svg { display: block; flex: none; fill: none; stroke: #444; }
i { display: block; flex: none; }
.defs { position: absolute; width: 0; height: 0; }
.app { position: relative; min-height: 100vh; display: flex; flex-direction: column; background: #525252; font: 13px/20px "Noto Sans", "Open Sans", sans-serif; color: #111; overflow: hidden; }

.title { height: 26px; display: flex; align-items: center; padding-left: 2px; background: linear-gradient(90deg, #d6e5f3, #dceaf7 360px, #b5d1ec 520px, #b5d1ec 820px, #a9c5e1 1000px, #b8d4ee 1200px, #b5d1ec); border-bottom: 2px solid #a8c8ea; box-shadow: inset 0 -1px #e8f2fc; }
.logo { width: 17px; height: 20px; }
.title h1 { margin: 0 0 0 7px; font-size: 14px; font-weight: 400; color: #000; flex: 1; line-height: 24px; }
.winbtns { display: flex; align-self: flex-start; margin-right: 5px; border: 1px solid #5c7088; border-top: 0; border-radius: 0 0 5px 5px; overflow: hidden; }
.winbtns button { width: 34px; height: 20px; display: flex; justify-content: center; align-items: center; background: linear-gradient(#dfeaf5 45%, #a9bfd8 50%, #c4d8ec); border-right: 1px solid #5c7088; }
.winbtns .close { width: 55px; border: 0; background: linear-gradient(#e8a898 45%, #c43c20 50%, #e0684a); }
.winbtns svg { width: 15px; height: 15px; }

.menubar { height: 32px; display: flex; align-items: center; color: #f2f2f2; }
.grip { width: 10px; height: 17px; background: radial-gradient(circle, #eee 1px, transparent 2px) 0 0 / 10px 4px; }
.menubar .grip { width: 7px; }
.mi { position: relative; }
.mi > button { height: 27px; padding: 0 8px 0 7px; display: block; }
.mi > .open { background: linear-gradient(#858b98, #747a86); color: #000; border: 1px solid #969eac; border-bottom: 0; padding: 0 7px 0 6px; }
.popup { position: absolute; left: 0; top: 26px; width: 321px; z-index: 20; color: #444; background: linear-gradient(90deg, #eee 25px, #b8b8b8 25px, #b8b8b8 26px, #fafafa 26px); border: 1px solid #8f97a4; padding: 2px 0; box-shadow: 3px 3px 2px #0007, inset 0 0 0 1px #fff; }
.grp + .grp { padding-top: 8px; background: linear-gradient(#c2c2c2, #c2c2c2) 33px 3px / 285px 1px no-repeat; }
.row { display: flex; align-items: center; width: 100%; height: 30px; padding: 0 14px 0 3px; text-align: left; }
.ic { width: 20px; height: 27px; display: flex; align-items: center; justify-content: center; margin-right: 8px; border: 1px solid transparent; border-radius: 2px; }
.ic.on { background: #fde08a; border-color: #e89828; }
.ic svg, .tool svg, .vtool svg, .val svg, .layer svg { width: 16px; height: 16px; }
.lb { flex: 1; white-space: nowrap; }
u { text-underline-offset: 3px; }
.arrow { border: 5px solid transparent; border-left: 6px solid #333; border-right: 0; margin-right: -6px; }

.toolrow { display: flex; gap: 1px; height: 27px; }
.second { height: 26px; }
.bar { display: flex; align-items: center; height: 26px; padding-right: 3px; border-radius: 3px; background: linear-gradient(#cfd1d6, #adb2bd 60%, #a3a9b5); }
.wide1 { width: 1009px; padding-right: 6px; }
.tool { width: 21px; height: 24px; display: flex; align-items: center; justify-content: center; position: relative; flex: none; }
.tool.active { border: 1px solid #d8a050; background: linear-gradient(#fbdcae, #fbc16a); }
.fly::after { content: ""; position: absolute; right: 1px; bottom: 1px; border: 2px solid #2a98e8; border-top-color: transparent; border-left-color: transparent; }
.sep { width: 8px; height: 24px; background: linear-gradient(90deg, transparent 3px, #888e9a 3px, #888e9a 4px, #fff 4px, #fff 5px, transparent 5px); }
.field { display: flex; align-items: center; height: 24px; background: #fff; border: 1px solid #686b78; border-width: 2px 1px 0 2px; margin-left: 2px; font: 14px/18px "Liberation Sans", Arial, sans-serif; color: #112; }
.field.grey { flex: 1; background: #efefef; }
.field select { min-width: 0; }
.layer { width: 512px; margin-left: 1px; padding-left: 2px; }
.layer svg + svg, .val svg + svg { margin-left: 1px; }
.wide2 { padding-right: 6px; }
.wide2 .grip { width: 7px; }
.ls { width: 144px; margin-left: 6px; padding-left: 4px; gap: 2px; }
.rule { width: 72px; height: 1px; background: #000; }

.work { flex: 1; display: flex; min-height: 0; position: relative; }
.vbar { width: 23px; align-self: flex-start; padding: 0 1px 9px; display: flex; flex-direction: column; align-items: center; background: linear-gradient(90deg, #d0d3d8, #a3a9b4); border-radius: 4px; flex: none; }
.right { padding-bottom: 2px; width: 24px; margin-left: 1px; }
.hgrip { width: 17px; height: 11px; background: radial-gradient(circle, #444 1px, transparent 2px) 0 3px / 4px 5px repeat-x; }
.vtool { width: 22px; height: 23px; display: flex; align-items: center; justify-content: center; position: relative; }
.vsep { width: 21px; height: 8px; background: linear-gradient(transparent 3px, #888e9a 3px, #888e9a 4px, #fff 4px, #fff 5px, transparent 5px); }

.side { width: 219px; margin-left: 2px; display: flex; flex-direction: column; flex: none; }
.panel { flex: 1; margin-top: 1px; border: 1px solid #d0d0d0; background: #d8dadd; display: flex; flex-direction: column; }
.ptitle { height: 27px; background: #9d9e9d; display: flex; align-items: center; padding: 0 5px 0 3px; color: #444; gap: 6px; }
.ptitle span { flex: 1; }
.ptitle svg { width: 10px; height: 10px; }
.pbody { flex: 1; margin: 2px 2px 1px; background: #fff; border: 1px solid #777c86; }
.ptools { display: flex; align-items: center; height: 27px; padding-left: 1px; background: linear-gradient(#cfd1d6, #a3a9b5); }
.ptools .tool { width: 20px; }
.ptools .sep { width: 9px; }
table { width: 100%; table-layout: fixed; border-collapse: collapse; font: 14px/18px "Liberation Sans", Arial, sans-serif; color: #000; }
th, td { height: 25px; padding: 0 0 0 12px; text-align: left; font-weight: 400; border-bottom: 1px solid #777; white-space: nowrap; }
th { width: 101px; border-right: 1px solid #777; }
td { padding-left: 2px; overflow: hidden; }
tr.first th, tr.first td { height: 27px; padding-top: 2px; }
tr.first th { padding-left: 5px; }
tr.head th { height: 22px; padding: 0 2px 0 3px; background: linear-gradient(#cfd1d6, #9aa0ad); border-right: 0; font: bold 14px/20px "Noto Sans", sans-serif; }
tr.head span { display: flex; justify-content: space-between; align-items: center; }
tr.head button { width: 16px; height: 16px; border: 1px solid #888; background: linear-gradient(#2a50a0, #2a50a0) center / 10px 2px no-repeat, #e4e6ea; }
.val { display: flex; align-items: center; }
.val .rule { width: 72px; margin: 0 2px 0 1px; }
.ptabs { height: 27px; margin-bottom: 5px; display: flex; align-items: flex-start; color: #eee; }
.ptabs button { height: 26px; padding: 0 7px; width: 52px; }
.ptabs .cur { width: 70px; padding: 0; background: linear-gradient(#c4ccd0, #f4f6f7 50%); color: #222; border-radius: 0 0 4px 4px; border: 1px solid #c8e0e8; border-top: 0; }

.doc { flex: 1; min-width: 0; margin: 0 0 3px 5px; border: 1px solid #999; display: flex; flex-direction: column; background: #fff; padding: 0 2px 2px; }
.dtabs { height: 31px; margin: 0 -2px; display: flex; align-items: flex-end; padding-left: 5px; background: linear-gradient(#959da9, #d0d3d8); border-bottom: 1px solid #fff; }
.dtab { height: 28px; position: relative; padding: 0 4px 2px 13px; background: #525252; color: #ddd; border-top: 1px solid #ccc; clip-path: polygon(9px 0, 100% 0, 100% 100%, 0 100%, 0 9px); width: 150px; text-align: left; }
.dtab.cur { width: 146px; padding: 0 9px 2px 26px; background: #fff; color: #000; font-weight: 700; display: flex; align-items: center; justify-content: space-between; clip-path: polygon(24px 0, 100% 0, 100% 100%, 0 100%); border: 0; }
.dtab svg { width: 9px; height: 9px; }
.more { margin: 0 6px 11px auto; border: 5px solid transparent; border-top-color: #555; border-bottom: 0; }
.view { flex: 1; position: relative; background: #000; min-height: 200px; border-top: 1px solid #777; }
.canvas { position: absolute; inset: 0; width: 100%; height: 100%; }
.ucs { position: absolute; left: 30px; bottom: 22px; width: 160px; height: 160px; }
.sheets { height: 26px; border-top: 1px solid #888; background: #f0f0f0; display: flex; align-items: flex-start; font: 13px/20px "Noto Sans", sans-serif; padding-left: 10px; }
.tri { border: 5px solid transparent; }
.tri.l { border-right: 5px solid #333; border-left: 0; margin: 6px 8px 0 0; }
.tri.r { border-left: 5px solid #333; border-right: 0; margin: 6px 9px 0; }
.sheet { position: relative; width: 35px; height: 22px; margin-left: -6px; padding: 0; }
.sheet svg { position: absolute; left: 0; top: 0; width: 100%; height: 22px; fill: none; stroke: #555; }
.sheet span { position: relative; }
.model { width: 68px; font-weight: 700; margin-left: 2px; z-index: 1; }
.model svg { fill: #fff; }
.listbtn { margin: 1px 0 0 auto; }
.listbtn svg { width: 22px; height: 20px; }
.hscroll { width: 50%; display: flex; height: 20px; margin-left: 5px; border-left: 2px solid #999; background: #ececec; align-items: flex-start; }
.hscroll .tri.l { margin-left: 4px; }
.hscroll .tri.r { margin: 6px 6px 0 11px; }
.track { flex: 1; display: flex; justify-content: flex-end; }
.thumb { width: 68%; height: 19px; margin-top: 1px; border: 1px solid #999; border-radius: 2px; background: linear-gradient(#f4f4f4 45%, #d4d5d8 50%, #c8cacd); display: flex; justify-content: center; align-items: center; gap: 2px; }
.thumb b { width: 2px; height: 9px; background: #777; }
.sizer { width: 14px; height: 14px; align-self: flex-end; margin: 0 0 3px 12px; }

.cmd { height: 71px; margin: 0 25px; display: flex; background: #fff; border-top: 1px solid #bbb; }
.cstrip { width: 26px; background: #9d9e9d; display: flex; flex-direction: column; align-items: center; padding-top: 4px; gap: 5px; color: #444; border-right: 1px solid #888; flex: none; }
.cstrip svg { width: 10px; height: 10px; margin-right: 8px; flex: none; }
.cstrip span { writing-mode: vertical-rl; transform: rotate(180deg); font-size: 12px; line-height: 18px; margin-left: -6px; }
.cbody { flex: 1; min-width: 0; font: 12px/14px "Liberation Mono", monospace; color: #111; }
.log { height: 55px; background: #efefef; border-top: 2px solid #666; border-bottom: 2px solid #777; display: flex; justify-content: space-between; overflow: hidden; }
.lines { display: flex; flex-direction: column; justify-content: flex-end; padding-left: 2px; }
.lines p { margin: 0; white-space: pre; flex: none; }
.vs { width: 20px; display: flex; flex-direction: column; justify-content: space-between; padding: 8px 4px 8px 3px; }
.tri.u { border-bottom-color: #444; border-top: 0; }
.tri.d { border-top-color: #444; border-bottom: 0; }
.prompt { display: flex; height: 15px; align-items: center; padding-left: 1px; }
.prompt input { flex: 1; }

.status { height: 38px; display: flex; position: relative; background: linear-gradient(#3f434f 8px, #2e2e2e 8px, #343434 32px, #3c3f44 36px, #9fb4c8 36px); color: #f4f4f4; font-size: 14px; }
.status output { width: 281px; padding: 9px 0 0 3px; }
.modes { display: flex; gap: 1px; align-items: flex-start; padding: 9px 0 0; color: #222; flex: 1; }
.modes button { height: 19px; line-height: 17px; padding: 0 3px 0 2px; border: 1px solid #888; background: linear-gradient(#fff 40%, #d4dae2 50%, #f4f4f4); }
.modes .on { background: linear-gradient(#fde0ae 40%, #fbc060 50%, #fdd692); border-color: #b88840; }
.stools { width: 338px; height: 36px; display: flex; align-items: flex-start; gap: 4px; padding: 5px 2px 0 8px; border-left: 2px solid #222; background: linear-gradient(#b8b8b8, #777 60%, #666); }
.st { width: 27px; height: 24px; display: flex; align-items: center; justify-content: center; background: linear-gradient(#fff, #e4e8ee 50%, #fff); border-radius: 2px; }
.st svg { width: 24px; height: 22px; }
.scale { width: 88px; height: 22px; margin-top: 2px; padding: 8px 0 0 16px; font-size: 13px; line-height: 14px; color: #222; background: linear-gradient(#fff, #ccd2da 45%, #fff); }

.stamp { position: absolute; left: 0; top: 0; width: 300px; height: 170px; z-index: 15; pointer-events: none; stroke: none; }
.big { font: bold 34px "Liberation Sans", sans-serif; fill: #ddd; fill-opacity: .75; stroke: #777; stroke-opacity: .5; }
.url { font: bold 14px "Liberation Sans", sans-serif; fill: #ddd; fill-opacity: .8; }
.tm { font: bold 8px "Liberation Sans", sans-serif; fill: #ddd; fill-opacity: .8; }
</style>
